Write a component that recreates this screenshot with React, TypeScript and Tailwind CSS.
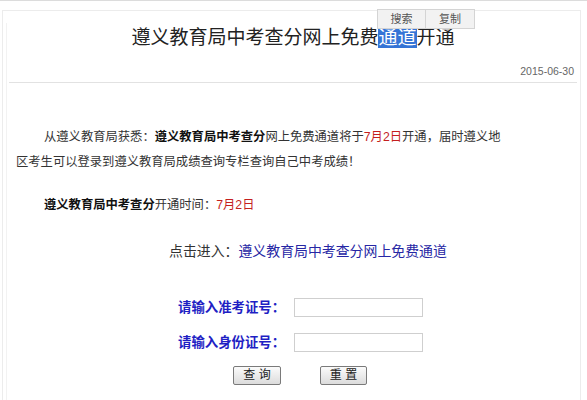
import React from "react"

const cjk = { fontFamily: '"Liberation Sans", "Noto Sans CJK SC", sans-serif' }

export default function App() {
  return (
    <div className="relative w-[587px] h-[400px] overflow-hidden bg-white border-t border-[#dcdcdc]" style={cjk}>
      {/* frame */}
      <div className="mt-[9px] ml-[2px] mr-[6px] h-[400px] border-l border-r border-t border-[#ececec]">
        <div className="ml-[3px] h-full border-l border-[#f2f2f2]">
          {/* title */}
          <h1 className="mt-[12px] text-center text-[19px] leading-[30px] text-[#222] -ml-[1px]">
            遵义教育局中考查分网上免费<span className="bg-[#3574d6] text-white">通道</span>开通
          </h1>

          {/* date + rule */}
          <div className="mt-[5px] mr-[3px] ml-[2px] border-b border-[#e2e2e2] text-right">
            <span className="pr-[3px] text-[10.5px] leading-[11px] text-[#666]">2015-06-30</span>
          </div>

          {/* body */}
          <p className="mt-[42px] pl-[9px] text-[12.3px] leading-[25px] text-[#333]">
            <span className="pl-[28px]">从遵义教育局获悉：</span>
            <b className="text-[#111]">遵义教育局中考查分</b>网上免费通道将于
            <span className="text-[#c41f1f]">7月2日</span>开通，届时遵义地
            <br />
            区考生可以登录到遵义教育局成绩查询专栏查询自己中考成绩！
          </p>

          <p className="mt-[18px] pl-[37px] text-[12.3px] leading-[25px] text-[#333]">
            <b className="text-[#111]">遵义教育局中考查分</b>开通时间：
            <span className="text-[#c41f1f]">7月2日</span>
          </p>

          <p className="mt-[21px] pl-[162px] text-[13.9px] leading-[25px] text-[#333]">
            点击进入：<a className="text-[#2626a4]">遵义教育局中考查分网上免费通道</a>
          </p>

          {/* form */}
          <div className="mt-[34px] ml-[171px] flex flex-col gap-[16px]">
            <div className="flex items-center gap-[6px]">
              <span className="w-[110px] text-[13.4px] font-bold leading-[19px] text-[#1f1fc4]">请输入准考证号：</span>
              <input className="h-[19px] w-[129px] border border-[#cfcfcf] outline-none" />
            </div>
            <div className="flex items-center gap-[6px]">
              <span className="w-[110px] text-[13.4px] font-bold leading-[19px] text-[#1f1fc4]">请输入身份证号：</span>
              <input className="h-[19px] w-[129px] border border-[#cfcfcf] outline-none" />
            </div>
          </div>
          <div className="mt-[14px] ml-[226px] flex gap-[39px]">
            <button className="h-[19px] w-[48px] rounded-[2px] border border-[#7a7a7a] bg-gradient-to-b from-[#fbfbfb] to-[#dcdcdc] text-[12px] leading-[17px] text-[#222]">
              查 询
            </button>
            <button className="h-[19px] w-[47px] rounded-[2px] border border-[#7a7a7a] bg-gradient-to-b from-[#fbfbfb] to-[#dcdcdc] text-[12px] leading-[17px] text-[#222]">
              重 置
            </button>
          </div>
        </div>
      </div>

      {/* selection popup */}
      <div className="absolute left-[377px] top-[8px] flex h-[20px] border border-[#d4d4d4] bg-[#f2f2f2] text-[11px] text-[#555]">
        <div className="flex w-[48px] items-center justify-center border-r border-[#d4d4d4]">搜索</div>
        <div className="flex w-[48px] items-center justify-center">复制</div>
      </div>
    </div>
  )
}
